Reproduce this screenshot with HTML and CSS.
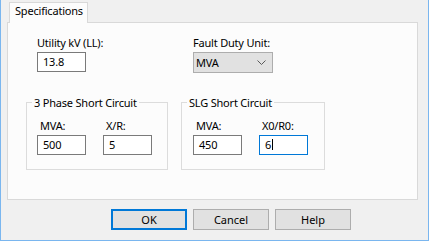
FILE: index.html
```html
<!DOCTYPE html>
<html lang="en">
<head>
    <meta charset="UTF-8">
    <meta name="viewport" content="width=device-width, initial-scale=1.0">
    <title>Specifications</title>
    <link rel="stylesheet" href="styles.css">
</head>
<body>
    <div class="dialog">
        <div class="tabs">
            <div class="tab">Specifications</div>
        </div>
        <div class="panel">
            <div class="top-row">
                <div class="field">
                    <label class="label">Utility kV (LL):</label>
                    <div class="textbox">13.8</div>
                </div>
                <div class="field">
                    <label class="label">Fault Duty Unit:</label>
                    <div class="combo">
                        <span>MVA</span>
                        <svg width="9" height="5" viewBox="0 0 9 5"><polyline points="0.5,0.5 4.5,4.5 8.5,0.5" fill="none" stroke="#5a5a5a" stroke-width="1"/></svg>
                    </div>
                </div>
            </div>
            <div class="groups">
                <fieldset class="group three-phase">
                    <legend>3 Phase Short Circuit</legend>
                    <div class="pair">
                        <div class="field">
                            <label class="label sub">MVA:</label>
                            <div class="textbox">500</div>
                        </div>
                        <div class="field">
                            <label class="label sub">X/R:</label>
                            <div class="textbox">5</div>
                        </div>
                    </div>
                </fieldset>
                <fieldset class="group slg">
                    <legend>SLG Short Circuit</legend>
                    <div class="pair">
                        <div class="field">
                            <label class="label sub">MVA:</label>
                            <div class="textbox">450</div>
                        </div>
                        <div class="field">
                            <label class="label sub">X0/R0:</label>
                            <div class="textbox focused">6<span class="caret"></span></div>
                        </div>
                    </div>
                </fieldset>
            </div>
        </div>
        <div class="buttons">
            <button class="btn default">OK</button>
            <button class="btn">Cancel</button>
            <button class="btn">Help</button>
        </div>
    </div>
</body>
</html>
```

FILE: styles.css
```css
body {
    margin: 0;
    font-family: "Noto Sans", sans-serif;
    font-size: 11px;
    letter-spacing: -0.2px;
    color: #000;
}
.dialog {
    width: 429px;
    height: 241px;
    box-sizing: border-box;
    background: #f0f0f0;
    border: 1px solid #7ab6ef;
    border-top: none;
    padding: 2px 10px 0 6px;
}
.tabs {
    display: flex;
    padding-left: 2px;
}
.tab {
    position: relative;
    z-index: 1;
    width: 79px;
    height: 21px;
    box-sizing: border-box;
    border: 1px solid #d9d9d9;
    border-bottom: none;
    background: #fcfcfc;
    padding: 1px 0 0 5px;
    line-height: 13px;
    margin-bottom: -1px;
}
.panel {
    height: 178px;
    box-sizing: border-box;
    border: 1px solid #d9d9d9;
    background: #fcfcfc;
    padding-top: 13px;
}
.top-row {
    display: grid;
    grid-template-columns: 156px auto;
    padding-left: 29px;
}
.label {
    display: block;
    line-height: 13px;
    margin-bottom: 3px;
    white-space: nowrap;
}
.label.sub {
    padding-left: 3px;
}
.textbox {
    width: 49px;
    height: 20px;
    box-sizing: border-box;
    border: 1px solid #7a7a7a;
    background: #fff;
    padding-left: 5px;
    line-height: 18px;
}
.textbox.focused {
    border-color: #0078d7;
}
.caret {
    display: inline-block;
    width: 1px;
    height: 11px;
    margin-left: 1px;
    background: #000;
    vertical-align: -1px;
}
.combo {
    width: 80px;
    height: 21px;
    box-sizing: border-box;
    border: 1px solid #adadad;
    background: #e1e1e1;
    display: flex;
    align-items: center;
    justify-content: space-between;
    padding: 0 6px 0 2px;
}
.combo svg {
    display: block;
}
.groups {
    display: flex;
    gap: 13px;
    padding-left: 18px;
    margin-top: 23px;
}
.group {
    margin: 0;
    min-width: 0;
    box-sizing: border-box;
    border: 1px solid #dcdcdc;
    padding: 10px 0 14px 10px;
}
.group legend {
    padding: 0 2px;
    line-height: 13px;
    margin-left: -5px;
}
.three-phase {
    width: 142px;
}
.slg {
    width: 144px;
    padding-left: 11px;
}
.slg legend {
    margin-left: -6px;
}
.pair {
    display: flex;
    gap: 17px;
}
.buttons {
    display: flex;
    gap: 6px;
    padding-left: 104px;
    margin-top: 9px;
}
.btn {
    width: 76px;
    height: 21px;
    box-sizing: border-box;
    border: 1px solid #adadad;
    background: #e1e1e1;
    font: inherit;
    color: #000;
    padding: 0;
}
.btn.default {
    border: 2px solid #0078d7;
}
```
